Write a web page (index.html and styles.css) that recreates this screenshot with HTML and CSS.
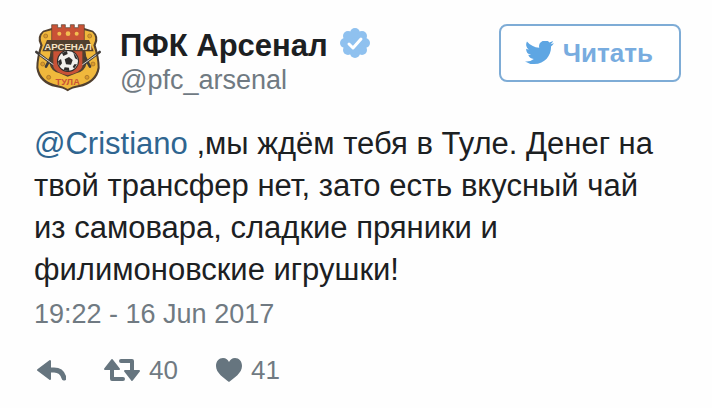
FILE: index.html
```html
<!DOCTYPE html>
<html lang="ru">
<head>
  <meta charset="UTF-8">
  <meta name="viewport" content="width=device-width, initial-scale=1.0">
  <title>ПФК Арсенал</title>
  <link rel="stylesheet" href="styles.css">
</head>
<body>
  <article class="tweet">
    <header class="tweet-header">
      <svg class="avatar" viewBox="33 22 204 210" aria-hidden="true">
        <!-- shield -->
        <path d="M60 48 L86 40 H184 L210 48 Q232 66 218 92 Q230 130 230 160 C226 192 200 212 170 217 Q148 220 134 230 Q120 220 98 217 C68 212 44 192 40 160 Q40 130 52 92 Q38 66 60 48Z" fill="#51402f"/>
        <path d="M62 53 L88 46 H182 L208 53 Q224 68 211 92 Q224 130 224 158 C220 188 196 206 168 211 Q148 214 134 223 Q120 214 102 211 C74 206 50 188 46 158 Q46 130 59 92 Q46 68 62 53Z" fill="#f0b83c"/>
        <path d="M84 104 H186 Q192 130 190 148 Q186 170 160 176 L134 186 L110 176 Q84 170 80 148 Q78 130 84 104Z" fill="#51402f"/>
        <g fill="#d99a2c" stroke="#9a6a28" stroke-width="2">
          <circle cx="68" cy="64" r="6"/>
          <circle cx="200" cy="64" r="6"/>
          <circle cx="59" cy="148" r="6"/>
          <circle cx="210" cy="148" r="6"/>
          <circle cx="77" cy="188" r="6"/>
          <circle cx="192" cy="188" r="6"/>
        </g>
        <!-- swords -->
        <g stroke="#403c3a" stroke-width="8" stroke-linecap="round">
          <path d="M40 112 L98 156"/>
          <path d="M230 112 L172 156"/>
          <path d="M69 156 L83 130"/>
          <path d="M201 156 L187 130"/>
        </g>
        <g stroke="#d9d5cf" stroke-width="3">
          <path d="M50 120 L94 152"/>
          <path d="M220 120 L176 152"/>
        </g>
        <!-- tower -->
        <path d="M86 30 H104 V39 H115 V30 H127 V39 H142 V30 H154 V39 H166 V30 H184 V88 H86Z" fill="#c95236" stroke="#51402f" stroke-width="2"/>
        <g fill="#f3bd51">
          <circle cx="109" cy="57" r="6"/>
          <circle cx="135" cy="57" r="7"/>
          <circle cx="161" cy="57" r="6"/>
        </g>
        <path d="M91 100 H178 V156 Q174 172 134 182 Q95 172 91 156Z" fill="#c95236"/>
        <path d="M58 110 L72 76 H198 L212 110Z" fill="#51402f"/>
        <text class="crest-name" x="135" y="105" text-anchor="middle">АРСЕНАЛ</text>
        <!-- ball -->
        <circle cx="135" cy="139" r="33" fill="#2e2b2a"/>
        <circle cx="135" cy="139" r="30" fill="#f2f0ed"/>
        <g fill="#2e2b2a">
          <path d="M125 134 L138 127 L149 136 L144 150 L129 149Z"/>
          <path d="M117 115 L132 109 L134 118 L121 124Z"/>
          <path d="M151 114 Q161 122 164 135 L156 131Z"/>
          <path d="M105 140 L114 133 L117 146 L110 155Z"/>
          <path d="M125 158 L138 159 L139 169 Q130 169 122 165Z"/>
          <path d="M154 149 L162 149 L154 161 L149 157Z"/>
        </g>
        <text class="crest-city" x="134" y="210" text-anchor="middle">ТУЛА</text>
      </svg>

      <div class="author">
        <div class="name">
          ПФК Арсенал
          <svg class="badge" viewBox="0 0 32 32" aria-hidden="true">
            <g fill="#8fc1ef">
              <circle cx="16" cy="16" r="12"/>
              <circle cx="16" cy="6" r="5"/>
              <circle cx="23" cy="9" r="5"/>
              <circle cx="26" cy="16" r="5"/>
              <circle cx="23" cy="23" r="5"/>
              <circle cx="16" cy="26" r="5"/>
              <circle cx="9" cy="23" r="5"/>
              <circle cx="6" cy="16" r="5"/>
              <circle cx="9" cy="9" r="5"/>
            </g>
            <path d="M10 17 L14 21 L22 12" fill="none" stroke="#fff" stroke-width="3" stroke-linecap="round" stroke-linejoin="round"/>
          </svg>
        </div>
        <div class="handle">@pfc_arsenal</div>
      </div>

      <button class="follow" type="button">
        <svg class="bird" viewBox="0 3 24 20" aria-hidden="true">
          <path fill="#5ea6e3" d="M23.95 4.57a10 10 0 0 1-2.82.77 4.96 4.96 0 0 0 2.16-2.72c-.95.55-2 .96-3.13 1.19a4.92 4.92 0 0 0-8.38 4.48C7.69 8.1 4.07 6.13 1.64 3.16a4.93 4.93 0 0 0 1.52 6.57 4.9 4.9 0 0 1-2.23-.61v.06a4.92 4.92 0 0 0 3.95 4.83 5 5 0 0 1-2.21.08 4.94 4.94 0 0 0 4.6 3.42A9.87 9.87 0 0 1 0 19.54a14 14 0 0 0 7.55 2.21c9.05 0 14-7.5 14-13.98 0-.21 0-.42-.02-.63a9.94 9.94 0 0 0 2.42-2.57z"/>
        </svg>
        Читать
      </button>
    </header>

    <p class="text"><a class="mention" href="#">@Cristiano</a> ,мы ждём тебя в Туле. Денег на твой трансфер нет, зато есть вкусный чай из самовара, сладкие пряники и филимоновские игрушки!</p>
    <time class="date" datetime="2017-06-16T19:22">19:22 - 16 Jun 2017</time>

    <footer class="actions">
      <button class="action" type="button" aria-label="Ответить">
        <svg class="icon-reply" viewBox="0 0 32 24" aria-hidden="true">
          <path d="M4 12 L16 3 V21Z" fill="#66757f" stroke="#66757f" stroke-width="2" stroke-linejoin="round"/>
          <path d="M15 12 H20 Q28 12 30 20" fill="none" stroke="#66757f" stroke-width="5" stroke-linecap="round"/>
        </svg>
      </button>
      <button class="action" type="button" aria-label="Ретвитнуть">
        <svg class="icon-retweet" viewBox="0 0 36 24" aria-hidden="true">
          <g fill="#66757f" stroke="#66757f" stroke-width="2" stroke-linejoin="round">
            <path d="M1 11 L8 2 L15 11Z"/>
            <path d="M21 13 L35 13 L28 22Z"/>
          </g>
          <g fill="none" stroke="#66757f" stroke-width="4" stroke-linecap="round" stroke-linejoin="round">
            <path d="M8 10 V21 H19"/>
            <path d="M17 3 H28 V14"/>
          </g>
        </svg>
        40
      </button>
      <button class="action" type="button" aria-label="Нравится">
        <svg class="icon-heart" viewBox="0 0 26 24" aria-hidden="true">
          <path d="M13 24 C8 20 0 15 0 8 C0 3 3 0 7 0 C10 0 12 2 13 4 C14 2 16 0 19 0 C23 0 26 3 26 8 C26 15 18 20 13 24Z" fill="#66757f"/>
        </svg>
        41
      </button>
    </footer>
  </article>
</body>
</html>
```

FILE: styles.css
```css
* { margin: 0; padding: 0; box-sizing: border-box; }

body {
  background: #fefefe;
  color: #1c2022;
  font-family: "Liberation Sans", Arial, sans-serif;
}

.tweet {
  padding: 22px 31px 22px 34px;
}

.tweet-header {
  display: flex;
  align-items: flex-start;
}

.avatar {
  flex: none;
  width: 68px;
  height: 70px;
}

.crest-name {
  font-size: 29px;
  font-weight: bold;
  fill: #f6e3c5;
}

.crest-city {
  font-size: 28px;
  font-weight: bold;
  fill: #c95236;
}

.author {
  flex: 1;
  padding: 7px 0 0 18px;
}

.name {
  display: flex;
  align-items: center;
  gap: 11px;
  font-size: 31px;
  font-weight: bold;
  line-height: 34px;
}

.badge {
  width: 32px;
  height: 32px;
  margin-top: -6px;
}

.handle {
  color: #707a82;
  font-size: 27px;
  line-height: 34px;
}

.follow {
  display: flex;
  align-items: center;
  gap: 9px;
  margin-top: 2px;
  padding: 0 26px 0 24px;
  height: 58px;
  background: #fff;
  border: 2px solid #7eacd6;
  border-radius: 8px;
  color: #78acdf;
  font-family: inherit;
  font-size: 26px;
  font-weight: bold;
  cursor: pointer;
}

.bird {
  width: 29px;
  height: 25px;
}

.text {
  margin-top: 26px;
  padding-right: 16px;
  font-size: 31px;
  line-height: 42px;
}

.mention {
  color: #2f6590;
  text-decoration: none;
}

.date {
  display: block;
  margin-top: 5px;
  color: #707a82;
  font-size: 27px;
  line-height: 36px;
}

.actions {
  display: flex;
  gap: 38px;
  margin-top: 20px;
}

.action {
  display: flex;
  align-items: center;
  gap: 9px;
  height: 36px;
  background: none;
  border: none;
  color: #707a82;
  font-family: inherit;
  font-size: 26px;
  cursor: pointer;
}

.icon-reply { width: 32px; height: 24px; }
.icon-retweet { width: 36px; height: 24px; }
.icon-heart { width: 26px; height: 24px; }
```
